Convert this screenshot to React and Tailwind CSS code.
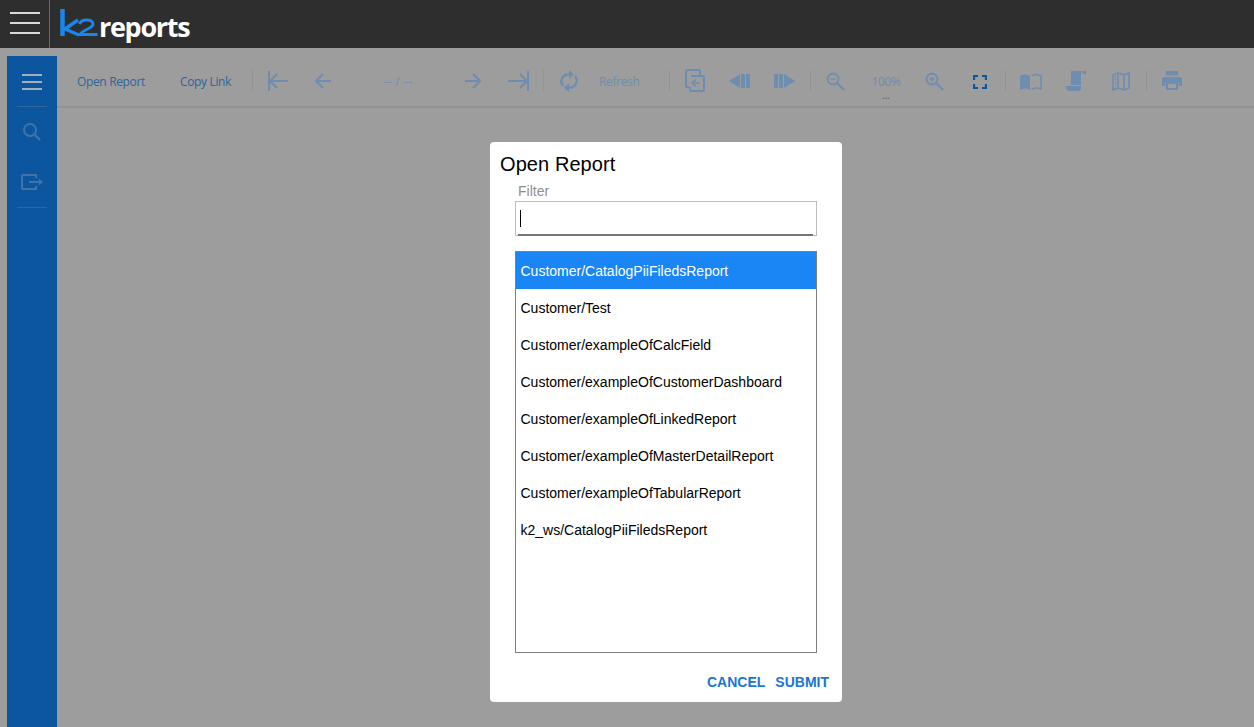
import React from 'react';

const reports = [
  'Customer/CatalogPiiFiledsReport',
  'Customer/Test',
  'Customer/exampleOfCalcField',
  'Customer/exampleOfCustomerDashboard',
  'Customer/exampleOfLinkedReport',
  'Customer/exampleOfMasterDetailReport',
  'Customer/exampleOfTabularReport',
  'k2_ws/CatalogPiiFiledsReport',
];

function Icon({ w = 24, h = 24, className = '', color = 'text-[#6e8db1]', children }) {
  return (
    <svg width={w} height={h} viewBox={`0 0 ${w} ${h}`} fill="none" stroke="currentColor" strokeWidth="2" className={`shrink-0 ${color} ${className}`}>
      {children}
    </svg>
  );
}

function Sep({ className = '' }) {
  return <div className={`h-[21px] w-px shrink-0 bg-[#929392] ${className}`} />;
}

function Logo() {
  return (
    <div className="ml-[10px] flex items-center">
      <svg width="38" height="28" viewBox="0 0 38 28" fill="none" className="mt-[-2px] shrink-0">
        <path d="M2.500 0V27" stroke="#1a86ea" strokeWidth="4.500" />
        <path d="M18 11L5 20L19 26" stroke="#1a86ea" strokeWidth="3.500" />
        <path d="M19.500 15C21 9.500 33 9.500 33 15C33 20 23 20 20 25.500H37.500" stroke="#1a86ea" strokeWidth="3" />
      </svg>
      <span className="ml-[1px] mt-[4px] font-['Open_Sans',sans-serif] text-[27px] leading-none font-bold tracking-[-1.300px] text-white">reports</span>
    </div>
  );
}

function Toolbar() {
  return (
    <div className="flex h-[52px] items-center border-b-2 border-[#929392] pb-[2px] font-['Open_Sans',sans-serif] text-[12px] tracking-[-0.35px] text-[#30649e]">
      <span className="ml-5 w-[103px] shrink-0 pt-[4px]">Open Report</span>
      <span className="w-[72px] shrink-0 pt-[4px]">Copy Link</span>
      <Sep />
      <Icon className="ml-[13px]"><path d="M3 3V23M22 13H4M11 6L4 13L11 20" /></Icon>
      <Icon className="ml-[23px]" w={20}><path d="M18 13H3M10 6L3 13L10 20" /></Icon>
      <span className="ml-[49px] w-[32px] shrink-0 pt-[4px] text-center text-[12px] tracking-[0.4px] whitespace-nowrap text-[#6e8db1]">-- / --</span>
      <Icon className="ml-[49px]" w={20}><path d="M2 13H17M10 6L17 13L10 20" /></Icon>
      <Icon className="ml-[24px]"><path d="M21 3V23M1 13H20M13 6L20 13L13 20" /></Icon>
      <Sep className="ml-[12px]" />
      <Icon className="ml-[13px]">
        <path d="M6 18C2 13 6 5 13 6.500M18 8C22 13 18 21 11 19.500" strokeWidth="2.200" />
        <path d="M12 2L17 6.500L12 10.500ZM12 24L7 19.500L12 15.500Z" fill="currentColor" stroke="none" />
      </Icon>
      <span className="ml-[18px] w-[51px] shrink-0 pt-[4px] text-[#6e8db1]">Refresh</span>
      <Sep className="ml-[19px]" />
      <Icon className="ml-[12px]">
        <path d="M5 19H7M5 19C4 19 4 18 4 17V4C4 3 5 2 6 2H17C18 2 18 3 18 4V7" />
        <path d="M9 8H21C22 8 22 9 22 10V22C22 23 21 23 20 23H10C9 23 8 23 8 21V19" />
        <path d="M18 15H11M14 11.500L10 15L14 18.500" strokeWidth="1.600" />
      </Icon>
      <Icon className="ml-[22px]" w={22}>
        <path d="M1 13L12 6V20Z" fill="currentColor" stroke="none" />
        <path d="M13 6H17V20H13ZM18 6H22V20H18Z" fill="currentColor" stroke="none" />
      </Icon>
      <Icon className="ml-[24px]" w={22}>
        <path d="M0 6H4V20H0ZM5 6H9V20H5Z" fill="currentColor" stroke="none" />
        <path d="M10 6L21 13L10 20Z" fill="currentColor" stroke="none" />
      </Icon>
      <Sep className="ml-[14px]" />
      <Icon className="ml-[15px]" w={20}>
        <circle cx="7" cy="11" r="5.500" strokeWidth="1.800" />
        <path d="M11 15L18 22" strokeWidth="2.200" />
        <path d="M4.500 11H9.500" strokeWidth="1.400" />
      </Icon>
      <div className="relative ml-[23px] w-[34px] shrink-0 pt-[4px] text-center leading-[14px] text-[#6e8db1]">
        100%
        <span className="absolute top-[22px] left-0 w-full text-center text-[9px] leading-[6px] font-bold tracking-normal text-[#6d6e6d]">...</span>
      </div>
      <Icon className="ml-[22px]" w={20}>
        <circle cx="7" cy="11" r="5.500" strokeWidth="1.800" />
        <path d="M11 15L18 22" strokeWidth="2.200" />
        <path d="M4.500 11H9.500M7 8.500V13.500" strokeWidth="1.400" />
      </Icon>
      <Icon className="ml-[28px]" w={14} color="text-[#0c559f]">
        <path d="M1 12V8H5M9 8H13V12M13 16V20H9M5 20H1V16" strokeWidth="2.200" />
      </Icon>
      <Sep className="ml-[18px]" />
      <Icon className="ml-[14px]" w={22}>
        <path d="M0 8C3 6 7 6 10 8V22C7 20 3 20 0 22Z" fill="currentColor" stroke="none" />
        <path d="M12 8C14 6 18 6 21 8V21C18 19.500 14 19.500 12 21.500" strokeWidth="1.600" />
      </Icon>
      <Icon className="ml-[24px]" w={20}>
        <path d="M5 3H17C15 4 15 5 15 7V17H5Z" fill="currentColor" stroke="none" />
        <path d="M17 3H20V6H16.500ZM0 18H15V20C15 22 14 23 13 23H3C1 23 0 20 0 18Z" fill="currentColor" stroke="none" />
      </Icon>
      <Icon className="ml-[26px]" w={18}>
        <path d="M1 7L6 5L12 7L17 5V20L12 22L6 20L1 22Z" strokeWidth="1.600" />
        <path d="M6 5V20M12 7V22" strokeWidth="1.600" />
        <path d="M3.500 8V19" strokeWidth="1.400" strokeDasharray="1.500 1" />
      </Icon>
      <Sep className="ml-[16px]" />
      <Icon className="ml-[15px]" w={20}>
        <path d="M4 3H16V7.500H4ZM2 9H18C19 9 20 10 20 11V18H16.500V14H3.500V18H0V11C0 10 1 9 2 9Z" fill="currentColor" stroke="none" />
        <path d="M5 15H15V21H5Z" strokeWidth="2" />
      </Icon>
    </div>
  );
}

function Sidebar() {
  return (
    <div className="flex w-[50px] shrink-0 flex-col items-center bg-[#0c559f]">
      <div className="mt-[18px] flex w-5 flex-col gap-[5px]">
        <div className="h-[2px] bg-[#a3b0bc]" />
        <div className="h-[2px] bg-[#a3b0bc]" />
        <div className="h-[2px] bg-[#a3b0bc]" />
      </div>
      <div className="mt-[16px] h-px w-[30px] bg-[#2e68a3]" />
      <Icon className="mt-[12px]" color="text-[#3f74ab]">
        <circle cx="10" cy="11" r="6" strokeWidth="2" />
        <path d="M15 16L20 21" strokeWidth="2.400" />
      </Icon>
      <Icon className="mt-[27px]" color="text-[#3f74ab]">
        <path d="M16 8V5H3C2.500 5 2 5.500 2 6V18C2 18.500 2.500 19 3 19H16V16" strokeWidth="2" />
        <path d="M9 12H20" strokeWidth="2" />
        <path d="M19 8.500L23 12L19 15.500Z" fill="currentColor" stroke="none" />
      </Icon>
      <div className="mt-[13px] h-px w-[30px] bg-[#2e68a3]" />
    </div>
  );
}

function Dialog() {
  return (
    <div className="absolute top-[142px] left-[490px] flex h-[560px] w-[352px] flex-col rounded-[4px] bg-white font-['Liberation_Sans',Arial,sans-serif]">
      <h2 className="mt-[11px] ml-[10px] text-[20px] leading-[23px] tracking-[0.08px] text-black">Open Report</h2>
      <label className="mt-[7px] ml-[28px] text-[14px] leading-[16px] text-[#8f8f8f]">Filter</label>
      <div className="relative mt-[2px] ml-[25px] flex h-[35px] w-[302px] items-center border border-[#bdbdbd] pl-[4px]">
        <div className="h-[17px] w-px bg-black" />
        <div className="absolute right-[3px] -bottom-px left-[2px] h-[2px] bg-[#757575]" />
      </div>
      <div className="mt-[15px] ml-[25px] h-[402px] w-[302px] border border-[#808080] text-[14px]">
        {reports.map((name, i) => (
          <div key={name} className={`flex h-[37px] items-center px-[4px] pt-[2px] indent-[0.5px] ${i === 0 ? 'bg-[#1a85f5] text-white' : 'text-black'}`}>
            {name}
          </div>
        ))}
      </div>
      <div className="mt-[21px] mr-[13px] flex justify-end gap-[10px] text-[14px] leading-[16px] font-bold text-[#1976d2]">
        <span>CANCEL</span>
        <span>SUBMIT</span>
      </div>
    </div>
  );
}

export default function App() {
  return (
    <div className="relative flex h-[727px] flex-col overflow-hidden bg-[#9c9d9c]">
      <header className="flex h-12 shrink-0 items-center bg-[#2e2e2e]">
        <div className="flex h-full w-[50px] shrink-0 items-center justify-center border-r border-[#6a6a6a]">
          <div className="mb-[2px] flex w-[30px] flex-col gap-[8px]">
            <div className="h-[2px] bg-[#d8d8d8]" />
            <div className="h-[2px] bg-[#d8d8d8]" />
            <div className="h-[2px] bg-[#d8d8d8]" />
          </div>
        </div>
        <Logo />
      </header>
      <main className="flex flex-1 pt-2 pl-[7px]">
        <Sidebar />
        <div className="flex-1">
          <Toolbar />
        </div>
      </main>
      <Dialog />
    </div>
  );
}
